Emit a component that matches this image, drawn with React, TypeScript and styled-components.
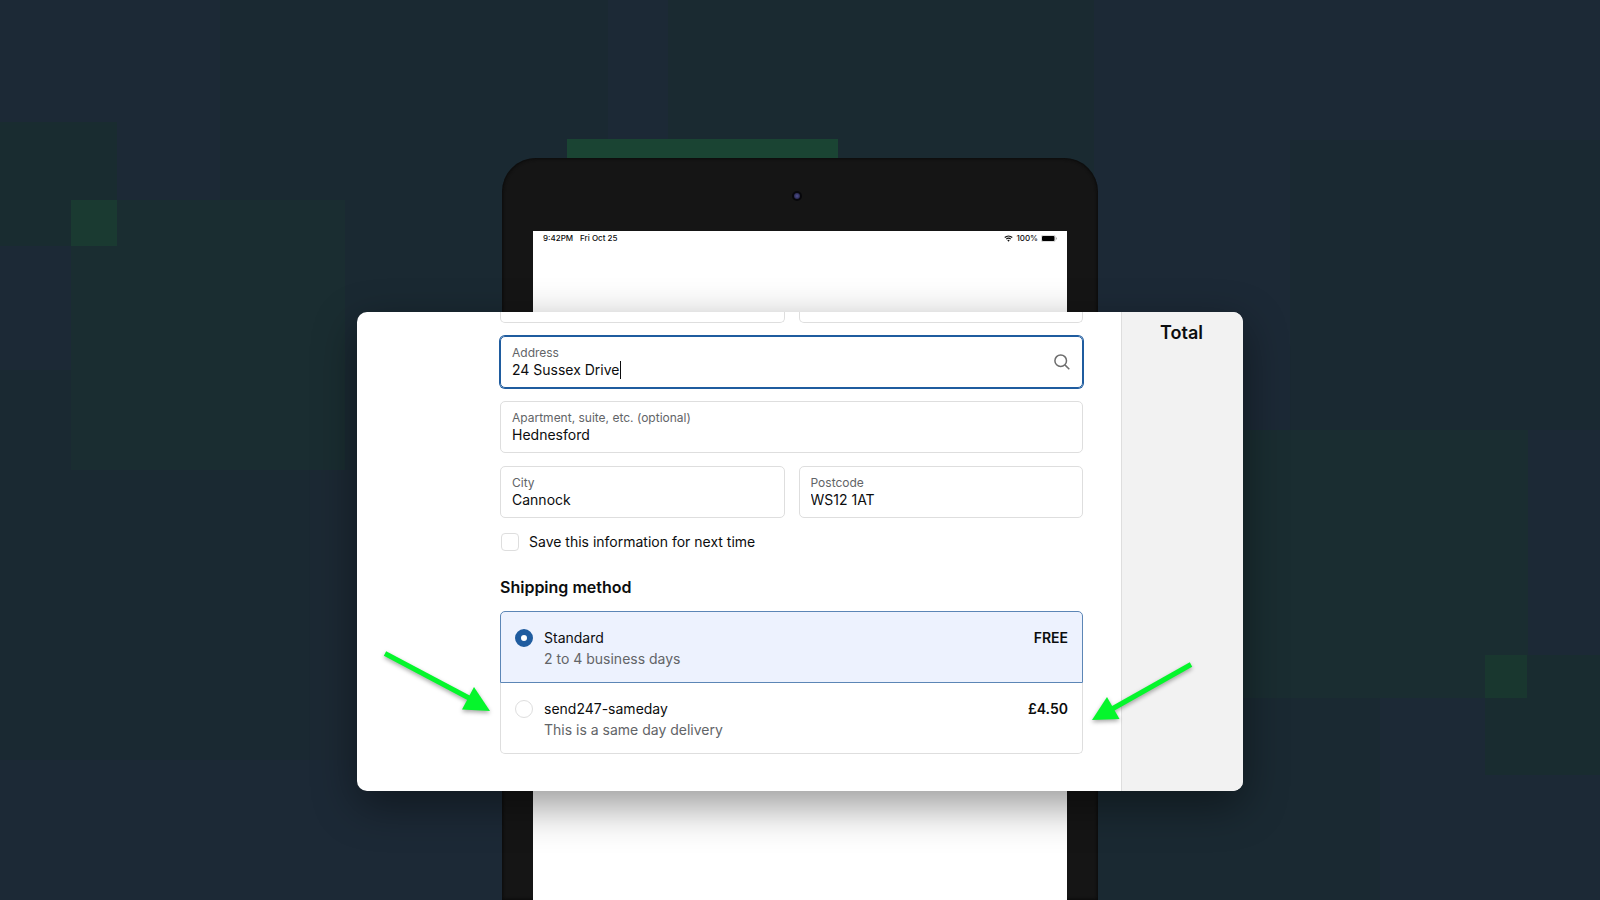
import React, { useState } from "react";
import styled, { createGlobalStyle, css } from "styled-components";

const colors = {
  ink: "#0c0d0e",
  muted: "#626467",
  line: "#dedede",
  accent: "#1f5c9f",
  accentLine: "#5c86b6",
  accentFill: "#edf2fe",
  aside: "#f2f2f2",
  marker: "#05f62c",
};

const GlobalStyle = createGlobalStyle`
  *, *::before, *::after { box-sizing: border-box; }
  body {
    margin: 0;
    background: #1b2934;
    color: ${colors.ink};
    font-family: Inter, "Liberation Sans", sans-serif;
  }
`;

const Stage = styled.main`
  position: relative;
  display: grid;
  grid-template-columns: minmax(0, 1fr);
  justify-items: center;
  min-height: 100vh;
  overflow: hidden;
`;

const Mosaic = styled.svg`
  position: absolute;
  inset: 0;
  width: 100%;
  height: 100%;
`;

const Tablet = styled.div`
  position: relative;
  grid-area: 1 / 1;
  display: flex;
  flex-direction: column;
  width: 100%;
  max-width: 596px;
  margin-top: 158px;
  padding: 0 31px;
  background: #151515;
  border-radius: 34px 34px 0 0;
  box-shadow: inset 0 0 3px 1px #0b0b0b;
`;

const Bezel = styled.div`
  display: flex;
  align-items: center;
  justify-content: center;
  height: 73px;
  padding: 3px 6px 0 0;
`;

const Camera = styled.span`
  width: 10px;
  height: 10px;
  border: 2px solid #07070b;
  border-radius: 50%;
  background: radial-gradient(circle, #4a4a86 10%, #25254a 80%);
`;

const Screen = styled.div`
  flex: 1;
  padding: 2px 10px;
  background: #fff;
`;

const StatusBar = styled.div`
  display: flex;
  align-items: center;
  justify-content: space-between;
  font-size: 8px;
  font-weight: 500;
  line-height: 10px;
`;

const StatusGroup = styled.div<{ $gap: number }>`
  display: flex;
  align-items: center;
  gap: ${(p) => p.$gap}px;
`;

const Card = styled.section`
  position: relative;
  grid-area: 1 / 1;
  align-self: start;
  display: flex;
  width: 100%;
  max-width: 886px;
  margin-top: 312px;
  margin-bottom: 24px;
  background: #fff;
  border-radius: 10px;
  box-shadow: 0 14px 44px rgba(0, 0, 0, 0.42);
`;

const Form = styled.form`
  flex: 1;
  min-width: 0;
  padding: 0 38px 37px 143px;
`;

const Aside = styled.aside`
  width: 122px;
  padding: 9px 0 0 38px;
  background: ${colors.aside};
  border-left: 1px solid ${colors.line};
  border-radius: 0 10px 10px 0;
`;

const TotalTitle = styled.h2`
  margin: 0;
  font-size: 18px;
  font-weight: 600;
  line-height: 24px;
`;

const Fields = styled.div`
  display: grid;
  grid-template-columns: 1fr 1fr;
  gap: 13px 14px;
`;

const FieldStub = styled.div`
  height: 11px;
  border: 1px solid ${colors.line};
  border-top: 0;
  border-radius: 0 0 5px 5px;
`;

const FieldBox = styled.div<{ $wide?: boolean; $active?: boolean }>`
  display: flex;
  align-items: center;
  justify-content: space-between;
  height: 52px;
  padding: 0 12px 0 11px;
  border: 1px solid ${colors.line};
  border-radius: 5px;
  ${(p) => p.$wide && css`grid-column: 1 / -1;`}
  ${(p) =>
    p.$active &&
    css`
      border-color: ${colors.accent};
      box-shadow: 0 0 0 1px ${colors.accent};
    `}
`;

const FieldBody = styled.div`
  flex: 1;
  min-width: 0;
`;

const FieldLabel = styled.label`
  display: block;
  color: ${colors.muted};
  font-size: 12px;
  line-height: 16px;
`;

const ValueRow = styled.div`
  display: flex;
  height: 18px;
`;

const FieldInput = styled.input<{ $fit?: boolean }>`
  width: ${(p) => (p.$fit ? "auto" : "100%")};
  ${(p) => p.$fit && css`field-sizing: content;`}
  padding: 0;
  border: 0;
  outline: 0;
  background: transparent;
  color: ${colors.ink};
  font: inherit;
  font-size: 14px;
  line-height: 18px;
`;

const Caret = styled.span`
  width: 1px;
  height: 18px;
  background: ${colors.ink};
`;

const SearchButton = styled.button`
  display: flex;
  padding: 0;
  border: 0;
  background: none;
  cursor: pointer;
`;

const SaveRow = styled.div`
  display: flex;
  align-items: center;
  gap: 10px;
  margin-top: 14px;
  padding-left: 1px;
  font-size: 14px;
  line-height: 20px;
`;

const Checkbox = styled.input`
  appearance: none;
  width: 18px;
  height: 18px;
  margin: 0;
  border: 1px solid ${colors.line};
  border-radius: 4px;
  &:checked {
    background: ${colors.accent};
  }
`;

const SectionTitle = styled.h2`
  margin: 25px 0 14px;
  font-size: 16px;
  font-weight: 600;
  line-height: 20px;
`;

const Option = styled.label<{ $selected: boolean }>`
  display: flex;
  align-items: flex-start;
  padding: 15px 14px 13px;
  border: 1px solid ${(p) => (p.$selected ? colors.accentLine : colors.line)};
  background: ${(p) => (p.$selected ? colors.accentFill : "#fff")};
  font-size: 14px;
  line-height: 21px;
  cursor: pointer;
  &:first-of-type {
    border-radius: 5px 5px 0 0;
  }
  &:last-of-type {
    border-top: 0;
    border-radius: 0 0 5px 5px;
  }
`;

const Radio = styled.input`
  appearance: none;
  flex: none;
  width: 18px;
  height: 18px;
  margin: 2px 11px 0 0;
  border: 1px solid ${colors.line};
  border-radius: 50%;
  background: #fff;
  &:checked {
    border: 6px solid ${colors.accent};
  }
`;

const OptionText = styled.span`
  flex: 1;
`;

const OptionNote = styled.span`
  display: block;
  color: ${colors.muted};
`;

const Price = styled.strong`
  font-weight: 600;
`;

const Arrow = styled.svg<{ $side: "left" | "right" }>`
  position: absolute;
  pointer-events: none;
  overflow: visible;
  filter: drop-shadow(0 2px 2px rgba(0, 0, 0, 0.35));
  ${(p) =>
    p.$side === "left"
      ? css`top: 339px; left: 26px;`
      : css`top: 350px; right: 49px;`}
`;

function Backdrop() {
  return (
    <Mosaic viewBox="0 0 1600 900" preserveAspectRatio="none" shapeRendering="crispEdges" aria-hidden="true">
      <rect width="1600" height="900" fill="#1c2936" />
      <rect x="220" width="388" height="760" fill="#1a2932" />
      <rect x="668" width="426" height="300" fill="#1a2a31" />
      <rect y="370" width="310" height="390" fill="#1a2932" />
      <rect x="310" y="470" width="60" height="290" fill="#1c2934" />
      <rect y="122" width="117" height="124" fill="#192c30" />
      <rect x="71" y="200" width="274" height="270" fill="#1a2d31" />
      <rect x="71" y="200" width="46" height="46" fill="#1a3a31" />
      <rect x="567" y="139" width="271" height="30" fill="#1a4433" />
      <rect x="1290" y="140" width="310" height="290" fill="#1a2932" />
      <rect x="1098" y="698" width="282" height="202" fill="#1a2932" />
      <rect x="1240" y="430" width="288" height="268" fill="#1a2d31" />
      <rect x="1485" y="655" width="115" height="120" fill="#192c30" />
      <rect x="1485" y="655" width="42" height="43" fill="#19372f" />
    </Mosaic>
  );
}

function WifiIcon() {
  return (
    <svg width="9" height="7" viewBox="0 0 18 14" aria-hidden="true">
      <path d="M1.5 5a11 11 0 0 1 15 0M4.5 8.2a6.6 6.6 0 0 1 9 0" fill="none" stroke="#111" strokeWidth="2.4" />
      <path d="M6.6 10.6a3.6 3.6 0 0 1 4.8 0L9 13.4z" fill="#111" />
    </svg>
  );
}

function BatteryIcon() {
  return (
    <svg width="16" height="7" viewBox="0 0 32 14" aria-hidden="true">
      <rect x="0.5" y="0.5" width="28" height="13" rx="3.5" fill="none" stroke="#a5a5a5" />
      <rect x="2" y="2" width="25" height="10" rx="2" fill="#000" />
      <path d="M30 4.5q2 .8 2 2.5t-2 2.5z" fill="#a5a5a5" />
    </svg>
  );
}

function SearchIcon() {
  return (
    <svg width="16" height="16" viewBox="0 0 16 16" fill="none" stroke="#6d6d6d" strokeWidth="1.5" aria-hidden="true">
      <circle cx="6.7" cy="6.7" r="5.8" />
      <path d="M10.9 10.9 15.3 15.3" />
    </svg>
  );
}

type FieldProps = { id: string; label: string; initial: string; wide?: boolean };

function Field({ id, label, initial, wide }: FieldProps) {
  return (
    <FieldBox $wide={wide}>
      <FieldBody>
        <FieldLabel htmlFor={id}>{label}</FieldLabel>
        <ValueRow>
          <FieldInput id={id} defaultValue={initial} />
        </ValueRow>
      </FieldBody>
    </FieldBox>
  );
}

const methods = [
  { id: "standard", name: "Standard", note: "2 to 4 business days", price: "FREE" },
  { id: "sameday", name: "send247-sameday", note: "This is a same day delivery", price: "£4.50" },
];

export default function App() {
  const [method, setMethod] = useState("standard");

  return (
    <>
      <GlobalStyle />
      <Stage>
        <Backdrop />
        <Tablet>
          <Bezel>
            <Camera />
          </Bezel>
          <Screen>
            <StatusBar>
              <StatusGroup $gap={7}>
                <span>9:42PM</span>
                <span>Fri Oct 25</span>
              </StatusGroup>
              <StatusGroup $gap={3}>
                <WifiIcon />
                <span>100%</span>
                <BatteryIcon />
              </StatusGroup>
            </StatusBar>
          </Screen>
        </Tablet>

        <Card>
          <Form onSubmit={(e) => e.preventDefault()}>
            <Fields>
              <FieldStub />
              <FieldStub />
              <FieldBox $wide $active>
                <FieldBody>
                  <FieldLabel htmlFor="address">Address</FieldLabel>
                  <ValueRow>
                    <FieldInput id="address" $fit defaultValue="24 Sussex Drive" />
                    <Caret />
                  </ValueRow>
                </FieldBody>
                <SearchButton type="button" aria-label="Search address">
                  <SearchIcon />
                </SearchButton>
              </FieldBox>
              <Field id="apartment" label="Apartment, suite, etc. (optional)" initial="Hednesford" wide />
              <Field id="city" label="City" initial="Cannock" />
              <Field id="postcode" label="Postcode" initial="WS12 1AT" />
            </Fields>

            <SaveRow>
              <Checkbox type="checkbox" id="save" />
              <label htmlFor="save">Save this information for next time</label>
            </SaveRow>

            <SectionTitle>Shipping method</SectionTitle>
            <div role="radiogroup" aria-label="Shipping method">
              {methods.map((m) => (
                <Option key={m.id} htmlFor={m.id} $selected={method === m.id}>
                  <Radio
                    type="radio"
                    name="method"
                    id={m.id}
                    checked={method === m.id}
                    onChange={() => setMethod(m.id)}
                  />
                  <OptionText>
                    {m.name}
                    <OptionNote>{m.note}</OptionNote>
                  </OptionText>
                  <Price>{m.price}</Price>
                </Option>
              ))}
            </div>
          </Form>
          <Aside>
            <TotalTitle>Total</TotalTitle>
          </Aside>

          <Arrow $side="left" width="108" height="62" viewBox="0 0 108 62" aria-hidden="true">
            <path d="M2 2.5 86 47" stroke={colors.marker} strokeWidth="5" />
            <path d="M91 36 107 60 79 58.5z" fill={colors.marker} />
          </Arrow>
          <Arrow $side="right" width="102" height="60" viewBox="0 0 102 60" aria-hidden="true">
            <path d="M99 2.5 20 47" stroke={colors.marker} strokeWidth="5" />
            <path d="M15 35 27.5 57 0 58z" fill={colors.marker} />
          </Arrow>
        </Card>
      </Stage>
    </>
  );
}
